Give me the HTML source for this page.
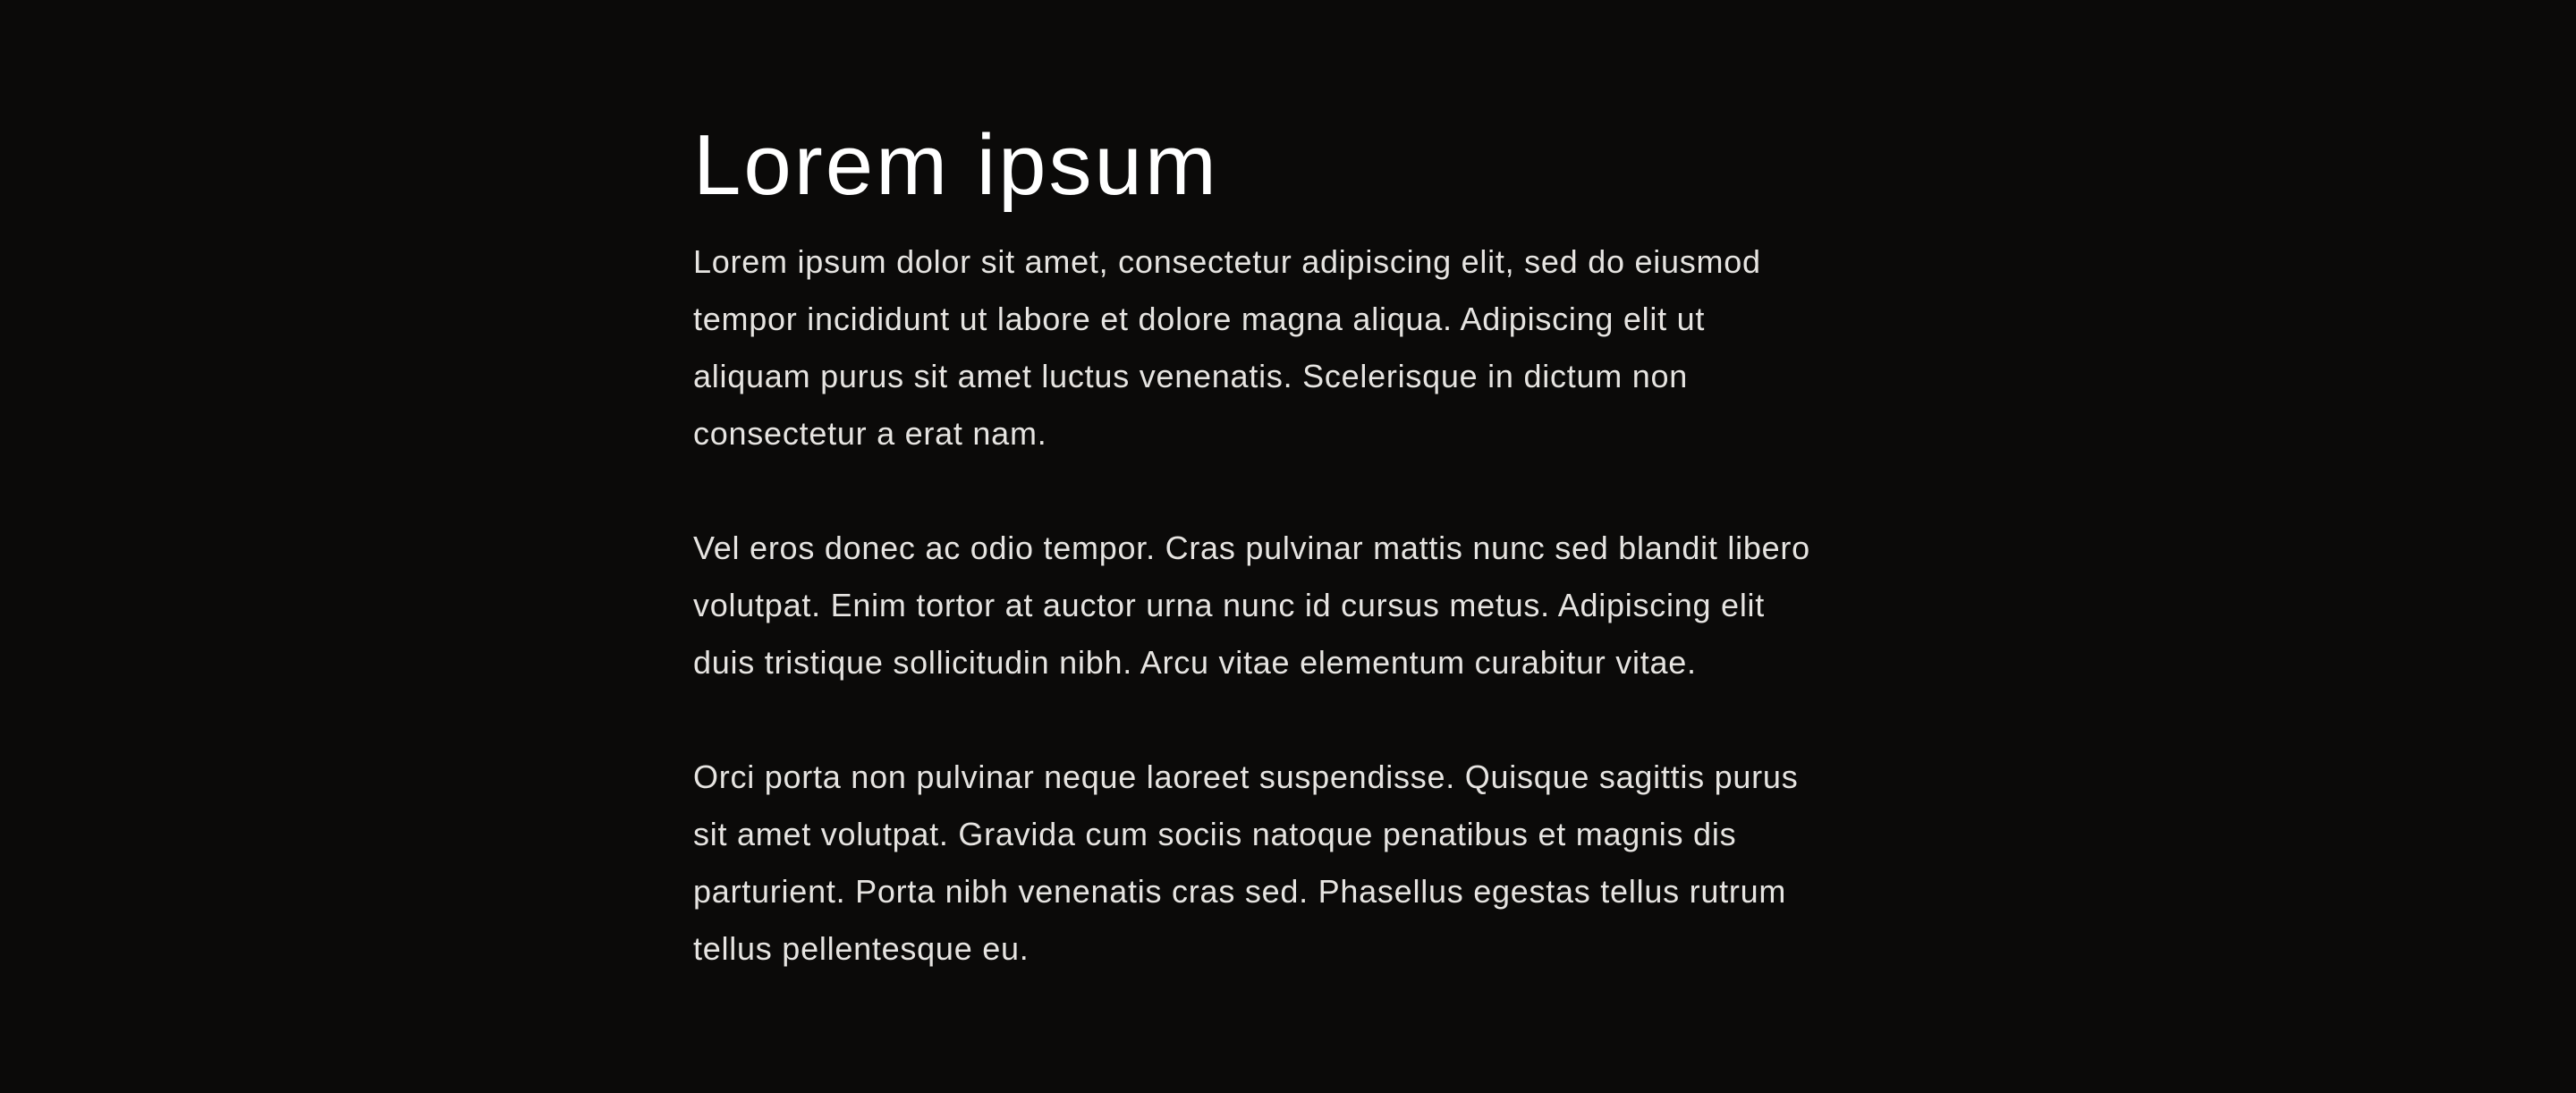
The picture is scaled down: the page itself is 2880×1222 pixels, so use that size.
<!DOCTYPE html>
<html><head><meta charset="utf-8"><style>
html,body{margin:0;padding:0;background:#0b0a09;width:2880px;height:1222px;overflow:hidden}
.c{position:absolute;left:775px;top:137px}
h1{margin:0;font:400 96px/96px "Liberation Sans",sans-serif;color:#fff;letter-spacing:3px}
p{margin:28px 0 0;font:400 36px/64px "Liberation Sans",sans-serif;color:#e6e4e1;white-space:nowrap;letter-spacing:0.75px}
p+p{margin-top:64px}
</style></head><body><div class="c">
<h1>Lorem ipsum</h1>
<p>Lorem ipsum dolor sit amet, consectetur adipiscing elit, sed do eiusmod<br>tempor incididunt ut labore et dolore magna aliqua. Adipiscing elit ut<br>aliquam purus sit amet luctus venenatis. Scelerisque in dictum non<br>consectetur a erat nam.</p>
<p>Vel eros donec ac odio tempor. Cras pulvinar mattis nunc sed blandit libero<br>volutpat. Enim tortor at auctor urna nunc id cursus metus. Adipiscing elit<br>duis tristique sollicitudin nibh. Arcu vitae elementum curabitur vitae.</p>
<p>Orci porta non pulvinar neque laoreet suspendisse. Quisque sagittis purus<br>sit amet volutpat. Gravida cum sociis natoque penatibus et magnis dis<br>parturient. Porta nibh venenatis cras sed. Phasellus egestas tellus rutrum<br>tellus pellentesque eu.</p>
</div></body></html>
